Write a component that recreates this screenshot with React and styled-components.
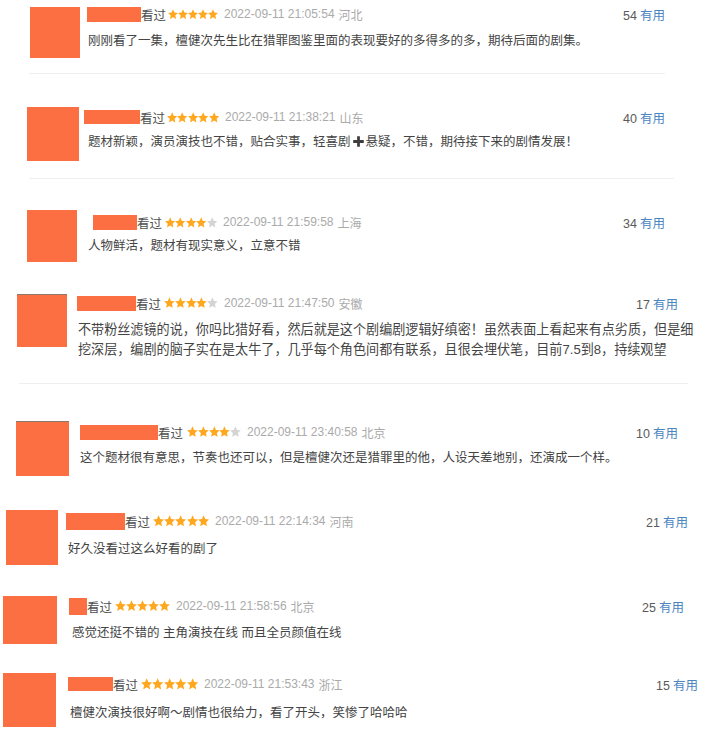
import React from 'react';
import styled, { createGlobalStyle } from 'styled-components';

const GlobalStyle = createGlobalStyle`
    html, body {
        margin: 0;
        padding: 0;
        background: #ffffff;
    }
    body {
        font-family: "Liberation Sans", "Noto Sans CJK SC", sans-serif;
        color: #494949;
    }
`;

const Page = styled.div`
    width: 716px;
    height: 734px;
    overflow: hidden;
    padding-top: 7px;
    box-sizing: border-box;
    background: #fff;
`;

const Entry = styled.div`
    display: flex;
    flex-direction: column;
    box-sizing: border-box;
    width: ${p => p.$right}px;
    height: ${p => p.$height}px;
    padding-left: ${p => p.$left}px;
`;

const Main = styled.div`
    display: flex;
    align-items: flex-start;
`;

const Avatar = styled.div`
    flex: none;
    width: ${p => p.$w}px;
    height: ${p => p.$h}px;
    background: #fc6f42;
    border-top: ${p => (p.$edge ? '1px solid #8a7a6c' : 'none')};
    box-sizing: border-box;
`;

const Body = styled.div`
    flex: 1;
    min-width: 0;
    margin-left: ${p => p.$gap}px;
    padding-top: ${p => p.$top}px;
`;

const Header = styled.div`
    display: flex;
    align-items: center;
    height: 14px;
    font-size: 12.5px;
    white-space: nowrap;
`;

const Redact = styled.span`
    flex: none;
    display: inline-block;
    width: ${p => p.$w}px;
    height: ${p => p.$h || 15}px;
    margin-left: ${p => p.$shift}px;
    background: #fc6f42;
`;

const Watched = styled.span`
    color: #4f4f4f;
`;

const Stars = styled.span`
    display: inline-flex;
    margin: 0 6px 0 ${p => p.$lead}px;
`;

const Meta = styled.span`
    color: #aaa;
    font-size: 12px;
    & + & {
        margin-left: 4px;
    }
`;

const Votes = styled.span`
    margin-left: auto;
    font-size: 12.5px;
    color: #5a5a5a;
`;

const Useful = styled.span`
    color: #4a86c0;
    margin-left: 3px;
`;

const Text = styled.div`
    margin-top: ${p => p.$top}px;
    font-size: ${p => p.$size || 12.5}px;
    line-height: 20px;
    color: #444;
    white-space: nowrap;
`;

const Rule = styled.div`
    height: 1px;
    background: #efefef;
    margin-top: ${p => p.$top}px;
    margin-left: ${p => p.$shift}px;
    width: ${p => p.$w}px;
`;

const Plus = styled.svg`
    vertical-align: -2px;
    margin: 0 1px;
`;

function Star({ on, size }) {
    return (
        <svg width={size} height={size + 0.6} viewBox="0 0 24 24" preserveAspectRatio="none">
            <path
                d="M12 .6l3.5 7.6 8.3.9-6.2 5.6 1.7 8.2L12 18.7 4.7 22.9l1.7-8.2L.2 9.1l8.3-.9z"
                fill={on ? '#ffa81f' : '#d4d4d4'}
            />
        </svg>
    );
}

const comments = [
    {
        left: 30, height: 100, right: 665, aw: 50, ah: 51, gap: 8, top: 0,
        name: { w: 54, shift: -1 }, stars: 5, star: 10, lead: 2, date: '2022-09-11 21:05:54', loc: '河北', votes: 54,
        textTop: 10, lines: ['刚刚看了一集，檀健次先生比在猎罪图鉴里面的表现要好的多得多的多，期待后面的剧集。'],
        rule: { top: 15, shift: -1, w: 636 },
    },
    {
        left: 27, height: 103, right: 665, aw: 52, ah: 54, gap: 9, top: 3,
        name: { w: 56, shift: -4, h: 14 }, stars: 5, star: 10.4, lead: 2, date: '2022-09-11 21:38:21', loc: '山东', votes: 40,
        textTop: 8, lines: [['题材新颖，演员演技也不错，贴合实事，轻喜剧', 'plus', '悬疑，不错，期待接下来的剧情发展！']],
        rule: { top: 17, shift: 2, w: 645 },
    },
    {
        left: 27, height: 84, right: 665, aw: 50, ah: 52, gap: 11, top: 5,
        name: { w: 44, shift: 5 }, stars: 4, star: 10.4, lead: 3, date: '2022-09-11 21:59:58', loc: '上海', votes: 34,
        textTop: 7, lines: ['人物鲜活，题材有现实意义，立意不错'],
    },
    {
        left: 17, height: 127, right: 678, aw: 50, ah: 53, gap: 11, top: 2, edge: true,
        name: { w: 59, shift: -1 }, stars: 4, star: 10.8, lead: 3, date: '2022-09-11 21:47:50', loc: '安徽', votes: 17,
        textTop: 10, size: 13.1,
        lines: [
            '不带粉丝滤镜的说，你吗比猎好看，然后就是这个剧编剧逻辑好缜密！虽然表面上看起来有点劣质，但是细',
            '挖深层，编剧的脑子实在是太牛了，几乎每个角色间都有联系，且很会埋伏笔，目前7.5到8，持续观望',
        ],
        rule: { top: 23, shift: 2, w: 669 },
    },
    {
        left: 16, height: 89, right: 678, aw: 53, ah: 55, gap: 11, top: 4, edge: true,
        name: { w: 78, shift: 0 }, stars: 4, star: 10.8, lead: 4, date: '2022-09-11 23:40:58', loc: '北京', votes: 10,
        textTop: 9, lines: ['这个题材很有意思，节奏也还可以，但是檀健次还是猎罪里的他，人设天差地别，还演成一个样。'],
    },
    {
        left: 6, height: 86, right: 688, aw: 52, ah: 55, gap: 10, top: 4,
        name: { w: 59, shift: -2, h: 17 }, stars: 5, star: 11.2, lead: 3, date: '2022-09-11 22:14:34', loc: '河南', votes: 21,
        textTop: 11, lines: ['好久没看过这么好看的剧了'],
    },
    {
        left: 3, height: 77, right: 684, aw: 54, ah: 48, gap: 15, top: 3,
        name: { w: 18, shift: -3, h: 17 }, stars: 5, star: 11, lead: 3, date: '2022-09-11 21:58:56', loc: '北京', votes: 25,
        textTop: 10, lines: ['感觉还挺不错的 主角演技在线 而且全员颜值在线'],
    },
    {
        left: 3, height: 61, right: 698, aw: 53, ah: 54, gap: 14, top: 4,
        name: { w: 45, shift: -2, h: 14 }, stars: 5, star: 11.4, lead: 3, date: '2022-09-11 21:53:43', loc: '浙江', votes: 15,
        textTop: 12, lines: ['檀健次演技很好啊～剧情也很给力，看了开头，笑惨了哈哈哈'],
    },
];

function Line({ parts }) {
    if (typeof parts === 'string') return <div>{parts}</div>;
    return (
        <div>
            {parts.map((part, i) =>
                part === 'plus' ? (
                    <Plus key={i} width="13" height="13" viewBox="0 0 16 16">
                        <path d="M6.3 1.5h3.4v4.8h4.8v3.4H9.7v4.8H6.3V9.7H1.5V6.3h4.8z" fill="#3d3d3d" />
                    </Plus>
                ) : (
                    <span key={i}>{part}</span>
                )
            )}
        </div>
    );
}

function Comment({ c }) {
    return (
        <Entry $left={c.left} $height={c.height} $right={c.right}>
            <Main>
                <Avatar $w={c.aw} $h={c.ah} $edge={c.edge} />
                <Body $gap={c.gap} $top={c.top}>
                    <Header>
                        <Redact $w={c.name.w} $shift={c.name.shift} $h={c.name.h} />
                        <Watched>看过</Watched>
                        <Stars $lead={c.lead}>
                            {[0, 1, 2, 3, 4].map(i => <Star key={i} on={i < c.stars} size={c.star} />)}
                        </Stars>
                        <Meta>{c.date}</Meta>
                        <Meta>{c.loc}</Meta>
                        <Votes>
                            {c.votes}
                            <Useful>有用</Useful>
                        </Votes>
                    </Header>
                    <Text $top={c.textTop} $size={c.size}>
                        {c.lines.map((l, i) => <Line key={i} parts={l} />)}
                    </Text>
                </Body>
            </Main>
            {c.rule && <Rule $top={c.rule.top} $shift={c.rule.shift} $w={c.rule.w} />}
        </Entry>
    );
}

export default function App() {
    return (
        <>
            <GlobalStyle />
            <Page>
                {comments.map((c, i) => <Comment key={i} c={c} />)}
            </Page>
        </>
    );
}
